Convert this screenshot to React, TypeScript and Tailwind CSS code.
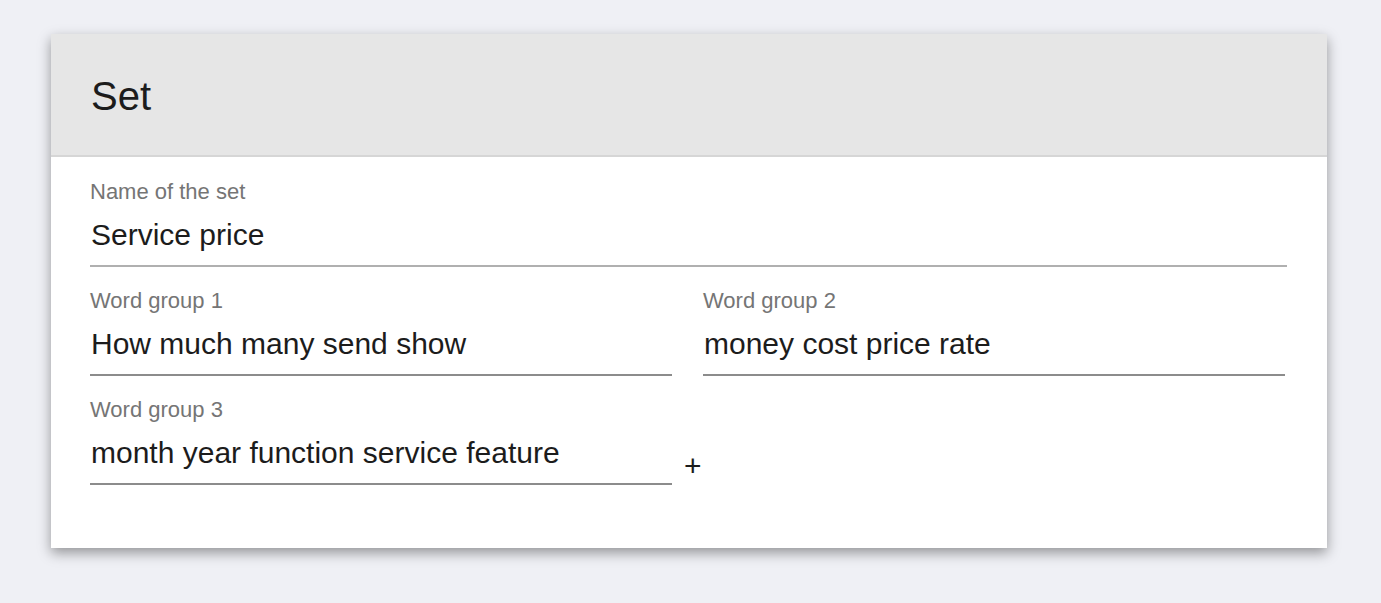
import React from "react";

function Field({ label, value, light, className = "" }: { label: string; value: string; light?: boolean; className?: string }) {
  return (
    <div className={className}>
      <div className="text-[22px] leading-[26px] text-[#757575]">{label}</div>
      <div
        className={`mt-[12px] pb-[12px] border-b-2 ${light ? "border-[#b0b0b0]" : "border-[#8c8c8c]"} text-[30px] leading-[36px] text-[#1c1c1c] pl-px`}
      >
        {value}
      </div>
    </div>
  );
}

export default function App() {
  return (
    <div
      className="min-h-screen bg-[#eff0f5] pt-[34px] pl-[51px]"
      style={{ fontFamily: '"Liberation Sans", Arial, sans-serif' }}
    >
      <div className="w-[1276px] bg-white shadow-[0_5px_12px_rgba(0,0,0,0.38)]">
        <div className="h-[121px] bg-[#e6e6e6] flex items-center pl-[40px] border-b-2 border-[#d6d6d6] box-content">
          <span className="pt-[3px] text-[40px] text-[#1c1c1c]">Set</span>
        </div>
        <div className="pl-[39px] pr-[40px] pt-[22px] pb-[63px]">
          <Field label="Name of the set" value="Service price" light />
          <div className="mt-[21px] grid grid-cols-[582px_582px] gap-x-[31px]">
            <Field label="Word group 1" value="How much many send show" />
            <Field label="Word group 2" value="money cost price rate" />
          </div>
          <div className="mt-[21px] flex items-end">
            <Field className="w-[582px]" label="Word group 3" value="month year function service feature" />
            <span className="ml-[12px] mb-[1px] text-[30px] leading-[36px] text-[#1c1c1c]">+</span>
          </div>
        </div>
      </div>
    </div>
  );
}
